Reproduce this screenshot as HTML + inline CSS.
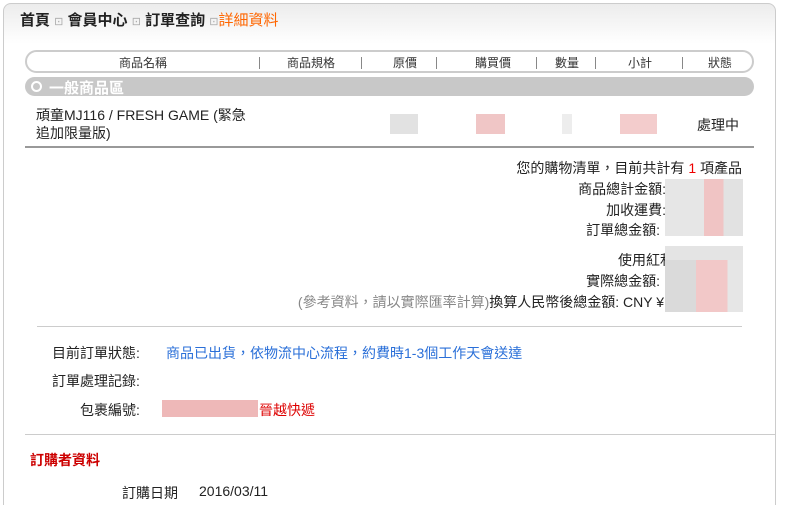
<!DOCTYPE html>
<html><head><meta charset="utf-8"><style>
html,body{margin:0;width:796px;height:505px;overflow:hidden}
body{background:#fff;font-family:"Liberation Sans","Noto Sans CJK TC",sans-serif;color:#222;position:relative}
.a{position:absolute;white-space:nowrap}
.box{position:absolute;left:3px;top:3px;width:771px;height:502px;border:1px solid #ccc;border-bottom:none;border-radius:8px 8px 0 0;background:linear-gradient(#ececec,#fff 40px)}
.hdr{position:absolute;left:25px;top:50px;width:725px;height:19px;border:2px solid #ccc;border-radius:12px;background:#fff}
.hdr span{position:absolute;top:2px;font-size:12px;color:#333;transform:translateX(-50%)}
.sep{position:absolute;top:5px;width:1px;height:12px;background:#888}
.bar{position:absolute;left:25px;top:77px;width:729px;height:19px;background:#c8c8c8;border-radius:10px}
.r{position:absolute;right:54px;font-size:14px;text-align:right}
.pix{position:absolute;height:20px}
.f13{font-size:14px}
</style></head><body>
<div class="box"></div>
<div class="a" style="left:20px;top:9px;font-size:15px;font-weight:bold;color:#222">首頁 <span style="color:#aaa;font-size:11px;font-weight:normal">⊡</span> 會員中心 <span style="color:#aaa;font-size:11px;font-weight:normal">⊡</span> 訂單查詢 <span style="color:#aaa;font-size:11px;font-weight:normal">⊡</span><span style="color:#f60;font-weight:normal">詳細資料</span></div>
<div class="hdr">
<span style="left:116px">商品名稱</span><div class="sep" style="left:232px"></div>
<span style="left:284px">商品規格</span><div class="sep" style="left:334px"></div>
<span style="left:378px">原價</span><div class="sep" style="left:409px"></div>
<span style="left:466px">購買價</span><div class="sep" style="left:509px"></div>
<span style="left:540px">數量</span><div class="sep" style="left:568px"></div>
<span style="left:613px">小計</span><div class="sep" style="left:655px"></div>
<span style="left:693px">狀態</span>
</div>
<div class="bar"><div class="a" style="left:6px;top:4px;width:7px;height:7px;border:2px solid #fff;border-radius:50%"></div><div class="a" style="left:24px;top:0px;color:#fff;font-weight:bold;font-size:15px">一般商品區</div></div>
<div class="a" style="left:36px;top:106px;line-height:18px;font-size:14px">頑童MJ116 / FRESH GAME (緊急<br>追加限量版)</div>
<div class="pix" style="left:390px;top:114px;width:28px;background:#e2e2e2"></div>
<div class="pix" style="left:476px;top:114px;width:29px;background:#f0c6c6"></div>
<div class="pix" style="left:562px;top:114px;width:10px;background:#ededed"></div>
<div class="pix" style="left:620px;top:114px;width:37px;background:#f3cccc"></div>
<div class="a" style="left:697px;top:115px;font-size:14px">處理中</div>
<div class="a" style="left:25px;top:146px;width:729px;height:2px;background:#999"></div>
<div class="r" style="top:158px">您的購物清單，目前共計有 <span style="color:#e00">1</span> 項產品</div>
<div class="r" style="top:179px;right:130px">商品總計金額:</div>
<div class="r" style="top:200px;right:130px">加收運費:</div>
<div class="r" style="top:220px;right:122px">訂單總金額: N</div>
<div class="r" style="top:250px;right:122px">使用紅利</div>
<div class="r" style="top:271px;right:122px">實際總金額: N</div>
<div class="r" style="top:292px;right:132px"><span style="color:#888">(參考資料，請以實際匯率計算)</span>換算人民幣後總金額: CNY ¥</div>
<div class="pix" style="left:665px;top:179px;width:78px;height:57px;background:linear-gradient(90deg,#e6e6e6 0 50%,#f0c4c4 50% 75%,#e2e2e2 75%)"></div>
<div class="pix" style="left:665px;top:246px;width:78px;height:14px;background:#e4e4e4"></div>
<div class="pix" style="left:665px;top:260px;width:78px;height:52px;background:linear-gradient(90deg,#dadada 0 40%,#f2c8c8 40% 80%,#e6e6e6 80%)"></div>
<div class="a" style="left:37px;top:326px;width:705px;height:1px;background:#ccc"></div>
<div class="a f13" style="left:52px;top:343px">目前訂單狀態:</div>
<div class="a f13" style="left:166px;top:343px;color:#2a6fd8">商品已出貨，依物流中心流程，約費時1-3個工作天會送達</div>
<div class="a f13" style="left:52px;top:371px">訂單處理記錄:</div>
<div class="a f13" style="left:80px;top:400px">包裹編號:</div>
<div class="pix" style="left:162px;top:400px;width:96px;height:17px;background:#eeb8b8"></div>
<div class="a f13" style="left:259px;top:400px;color:#d00">晉越快遞</div>
<div class="a" style="left:25px;top:434px;width:750px;height:1px;background:#ccc"></div>
<div class="a" style="left:30px;top:450px;color:#c00;font-weight:bold;font-size:14px">訂購者資料</div>
<div class="a f13" style="left:122px;top:483px">訂購日期</div>
<div class="a f13" style="left:199px;top:483px">2016/03/11</div>
</body></html>
